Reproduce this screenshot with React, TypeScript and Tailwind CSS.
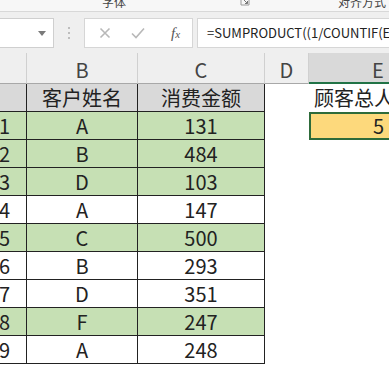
import React from "react";

const rows: { a: string; b: string; c: string; green: boolean }[] = [
  { a: "1", b: "A", c: "131", green: true },
  { a: "2", b: "B", c: "484", green: true },
  { a: "3", b: "D", c: "103", green: true },
  { a: "4", b: "A", c: "147", green: false },
  { a: "5", b: "C", c: "500", green: true },
  { a: "6", b: "B", c: "293", green: false },
  { a: "7", b: "D", c: "351", green: false },
  { a: "8", b: "F", c: "247", green: true },
  { a: "9", b: "A", c: "248", green: false },
];

export default function App() {
  return (
    <div className="w-[389px] h-[389px] overflow-hidden bg-white font-['Noto_Sans_CJK_SC',sans-serif] text-[#222]">
      {/* Ribbon bottom */}
      <div className="h-[12px] bg-[#f7f7f7] border-b border-[#d8d8d8] flex items-end overflow-hidden text-[12px] leading-[12px] text-[#444]">
        <div className="w-[102px] shrink-0" />
        <div className="w-[138px] shrink-0 mb-[3px]">字体</div>
        <div className="w-[98px] shrink-0 h-[12px] flex items-start">
          <svg width="10" height="7" viewBox="0 0 10 7" className="mt-0">
            <path d="M1 0 V6 H9 V0" fill="none" stroke="#9a9a9a" strokeWidth="1" />
            <path d="M4 1 L7.5 4.5 M7.5 2 V4.5 H5" fill="none" stroke="#777" strokeWidth="1" />
          </svg>
        </div>
        <div className="shrink-0 whitespace-nowrap mb-[3px]">对齐方式</div>
      </div>

      {/* Formula bar */}
      <div className="h-[41px] bg-[#efefef] flex items-start pt-[6px]">
        <div className="w-[54px] h-[30px] shrink-0 bg-white border border-l-0 border-[#cfcfcf] flex items-center justify-end pr-[7px]">
          <svg width="8" height="5" viewBox="0 0 8 5">
            <path d="M0 0 H8 L4 5 Z" fill="#7a7a7a" />
          </svg>
        </div>
        <div className="w-[30px] h-[30px] shrink-0 flex flex-col items-center justify-center gap-[3px]">
          <div className="w-[2px] h-[2px] bg-[#bdbdbd]" />
          <div className="w-[2px] h-[2px] bg-[#bdbdbd]" />
          <div className="w-[2px] h-[2px] bg-[#bdbdbd]" />
        </div>
        <div className="w-[109px] h-[30px] shrink-0 bg-white border border-[#d6d6d6] flex items-center">
          <svg width="12" height="12" viewBox="0 0 12 12" className="ml-[14px]">
            <path d="M1.5 1.5 L10.5 10.5 M10.5 1.5 L1.5 10.5" stroke="#b8b8b8" strokeWidth="1.6" fill="none" />
          </svg>
          <svg width="14" height="12" viewBox="0 0 14 12" className="ml-[20px]">
            <path d="M1 6.5 L5 10.5 L13 1.5" stroke="#b8b8b8" strokeWidth="1.6" fill="none" />
          </svg>
          <span className="ml-[26px] font-['Liberation_Serif',serif] italic text-[15px] text-[#555] leading-none">
            f<span className="text-[11px]">x</span>
          </span>
        </div>
        <div className="ml-[4px] flex-1 h-[30px] bg-white border border-r-0 border-[#d6d6d6] flex items-center pl-[9px] overflow-hidden whitespace-nowrap text-[13px] text-[#222]">
          =SUMPRODUCT((1/COUNTIF(E
        </div>
      </div>

      {/* Column headers */}
      <div className="h-[31px] flex bg-[#efefef] text-[20px] leading-none text-[#444]">
        <div className="w-[27px] shrink-0 border-r border-[#d0d0d0] border-b border-b-[#a8a8a8]" />
        <div className="w-[111px] shrink-0 border-r border-[#d0d0d0] border-b border-b-[#a8a8a8] flex items-center justify-center pt-[4px]">B</div>
        <div className="w-[127px] shrink-0 border-r border-[#d0d0d0] border-b border-b-[#a8a8a8] flex items-center justify-center pt-[4px]">C</div>
        <div className="w-[44px] shrink-0 border-r border-[#d0d0d0] border-b border-b-[#a8a8a8] flex items-center justify-center pt-[4px]">D</div>
        <div className="flex-1 bg-[#d9d9d9] border-b-2 border-[#217346] flex items-center pl-[63px] pt-[4px]">E</div>
      </div>

      {/* Title row */}
      <div className="h-[28px] flex text-[20px] leading-none">
        <div className="w-[27px] shrink-0 bg-[#d9d9d9] border-r border-b border-[#222]" />
        <div className="w-[111px] shrink-0 bg-[#d9d9d9] border-r border-b border-[#222] flex items-center justify-center">客户姓名</div>
        <div className="w-[127px] shrink-0 bg-[#d9d9d9] border-r border-b border-[#222] flex items-center justify-center">消费金额</div>
        <div className="w-[44px] shrink-0" />
        <div className="flex-1 flex items-center pl-[5px] whitespace-nowrap overflow-hidden">顾客总人数</div>
      </div>

      {rows.map((r, i) => (
        <div key={i} className="h-[28px] flex text-[20px] leading-none">
          <div className={`w-[27px] shrink-0 border-r border-b border-[#222] flex items-center overflow-hidden ${r.green ? "bg-[#c6e0b4]" : "bg-white"}`}>
            <span className="ml-[-1px]">{r.a}</span>
          </div>
          <div className={`w-[111px] shrink-0 border-r border-b border-[#222] flex items-center justify-center ${r.green ? "bg-[#c6e0b4]" : "bg-white"}`}>
            {r.b}
          </div>
          <div className={`w-[127px] shrink-0 border-r border-b border-[#222] flex items-center justify-center ${r.green ? "bg-[#c6e0b4]" : "bg-white"}`}>
            {r.c}
          </div>
          <div className="w-[44px] shrink-0" />
          {i === 0 ? (
            <div className="flex-1 bg-[#fdd97c] border-2 border-r-0 border-[#2e6b3a] flex items-center pl-[62px]">5</div>
          ) : (
            <div className="flex-1" />
          )}
        </div>
      ))}
    </div>
  );
}
